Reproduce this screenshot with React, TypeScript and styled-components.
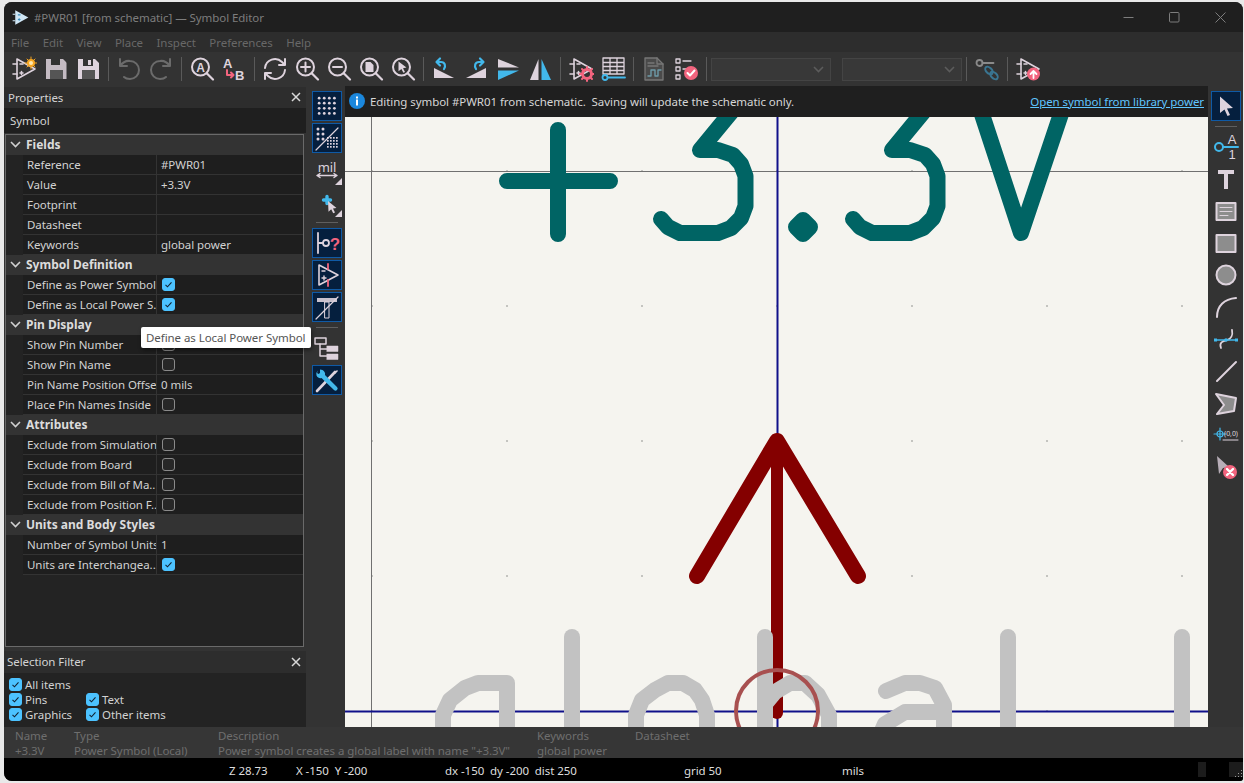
import React from "react";
import styled, { createGlobalStyle } from "styled-components";

const L = "#ded3dd";
const B = "#42b8eb";
const R = "#f2647e";
const D = "#6b6b6b";

const GlobalStyle = createGlobalStyle`
  html, body {
    margin: 0;
    height: 100%;
    overflow: hidden;
    background: #e9e9e9;
  }
  body {
    font-family: "Noto Sans", "Open Sans", sans-serif;
    font-size: 11.5px;
    letter-spacing: -0.06px;
  }
`;

const Window = styled.div`
  margin: 2px 0 0 4px;
  width: 1239px;
  height: 779px;
  border-radius: 8px 8px 3px 8px;
  overflow: hidden;
  display: flex;
  flex-direction: column;
  background: #333;
`;

const TitleBar = styled.div`
  height: 30px;
  flex: none;
  display: flex;
  align-items: center;
  padding-left: 8px;
  background: #1f1f1f;
  color: #7d7d7d;
`;

const TitleText = styled.span`
  margin-left: 5px;
`;

const WindowControls = styled.div`
  margin-left: auto;
  display: flex;
`;

const WindowButton = styled.div`
  width: 46px;
  height: 30px;
  display: flex;
  align-items: center;
  justify-content: center;
`;

const MenuBar = styled.div`
  height: 20px;
  flex: none;
  display: flex;
  align-items: center;
  gap: 13.5px;
  padding-left: 7px;
  background: #2d2d2d;
  color: #686868;
`;

const ToolBar = styled.div`
  height: 34px;
  flex: none;
  display: flex;
  align-items: center;
  padding-left: 4px;
  background: #333;
`;

const ToolSlot = styled.div`
  width: 32px;
  height: 32px;
  flex: none;
  display: flex;
  align-items: center;
  justify-content: center;
`;

const ToolSep = styled.div`
  width: 1px;
  height: 24px;
  flex: none;
  margin: 0 4px;
  background: #5a5a5a;
`;

const Combo = styled.div<{ $gap?: number }>`
  width: 120px;
  height: 23px;
  flex: none;
  box-sizing: border-box;
  margin-right: ${(p) => p.$gap ?? 0}px;
  display: flex;
  align-items: center;
  justify-content: flex-end;
  padding-right: 6px;
  border: 1px solid #444;
  background: #383838;
`;

const Main = styled.div`
  height: 641px;
  flex: none;
  display: flex;
`;

const LeftDock = styled.div`
  width: 302px;
  flex: none;
  display: flex;
  flex-direction: column;
  padding-top: 1px;
  box-sizing: border-box;
`;

const PanelHeader = styled.div<{ $h: number; $pad: number }>`
  height: ${(p) => p.$h}px;
  flex: none;
  display: flex;
  align-items: center;
  justify-content: space-between;
  padding: 0 5px 1px ${(p) => p.$pad}px;
  box-sizing: border-box;
  background: #2d2d2d;
  color: #d4d4d4;
`;

const SelectedKind = styled.div`
  height: 25px;
  flex: none;
  display: flex;
  align-items: center;
  padding-left: 6px;
  margin-bottom: 1px;
  background: #1f1f1f;
  color: #d4d4d4;
`;

const PropGrid = styled.div`
  margin-left: 1px;
  width: 299px;
  height: 513px;
  flex: none;
  box-sizing: border-box;
  border: 1px solid #6a6a6a;
  background: #232323;
`;

const GroupRow = styled.div`
  height: 20px;
  display: flex;
  align-items: center;
  padding-bottom: 1px;
  box-sizing: border-box;
  background: #333;
  color: #dcdcdc;
  font-weight: 700;
  font-size: 12px;
  letter-spacing: 0;
`;

const Chevron = styled.span`
  width: 20px;
  display: flex;
  justify-content: center;
  padding-right: 1px;
  box-sizing: border-box;
`;

const PropRow = styled.div`
  height: 20px;
  display: flex;
  margin-left: 17px;
  box-sizing: border-box;
  border-bottom: 1px solid #333;
  background: #1e1e1e;
  color: #d2d2d2;
`;

const PropLabel = styled.div`
  width: 134px;
  flex: none;
  box-sizing: border-box;
  padding-left: 4px;
  overflow: hidden;
  white-space: nowrap;
  line-height: 19px;
  border-right: 1px solid #333;
`;

const PropValue = styled.div`
  flex: 1;
  display: flex;
  align-items: center;
  padding-left: 4px;
  white-space: nowrap;
`;

const Check = styled.span<{ $on?: boolean }>`
  width: 13px;
  height: 13px;
  flex: none;
  box-sizing: border-box;
  border-radius: 3px;
  display: inline-flex;
  align-items: center;
  justify-content: center;
  background: ${(p) => (p.$on ? "#4cc2ff" : "#272727")};
  border: 1px solid ${(p) => (p.$on ? "#4cc2ff" : "#8a8a8a")};
`;

const RowCheck = styled(Check)`
  margin-left: 1px;
`;

const FilterHead = styled(PanelHeader)`
  margin-top: 4px;
`;

const FilterBody = styled.div`
  flex: 1;
  display: grid;
  grid-template-columns: 77px 1fr;
  grid-auto-rows: 15px;
  padding: 4px 0 0 5px;
  background: #232323;
  color: #d2d2d2;
`;

const FilterItem = styled.label<{ $wide?: boolean }>`
  display: flex;
  align-items: center;
  gap: 3px;
  white-space: nowrap;
  grid-column: ${(p) => (p.$wide ? "1 / span 2" : "auto")};
`;

const SideTools = styled.div<{ $w: number; $pad: number }>`
  width: ${(p) => p.$w}px;
  flex: none;
  box-sizing: border-box;
  padding: 5px 0 0 ${(p) => p.$pad}px;
  display: flex;
  flex-direction: column;
  gap: 2px;
`;

const SideButton = styled.div<{ $active?: boolean }>`
  width: 30px;
  height: 30px;
  flex: none;
  box-sizing: border-box;
  display: flex;
  align-items: center;
  justify-content: center;
  background: ${(p) => (p.$active ? "#051f3e" : "transparent")};
  border: 1px solid ${(p) => (p.$active ? "#0f5aa6" : "transparent")};
`;

const SideSep = styled.div`
  height: 1px;
  flex: none;
  width: 22px;
  margin: 3px 4px;
  background: #5f5f5f;
`;

const Center = styled.div`
  width: 863px;
  flex: none;
  display: flex;
  flex-direction: column;
`;

const InfoBar = styled.div`
  height: 31px;
  flex: none;
  display: flex;
  align-items: center;
  padding: 0 4px 1px 4px;
  box-sizing: border-box;
  background: #1f1f1f;
  color: #d6d6d6;
`;

const InfoText = styled.span`
  margin-left: 5px;
  white-space: pre;
`;

const InfoLink = styled.a`
  margin-left: auto;
  color: #60c6ff;
  text-decoration: underline;
`;

const Canvas = styled.svg`
  display: block;
  flex: none;
`;

const MessagePanel = styled.div`
  height: 31px;
  flex: none;
  display: flex;
  padding: 1px 0 0 11px;
  box-sizing: border-box;
  background: #363636;
  color: #6e6e6e;
  line-height: 15px;
`;

const MessageCol = styled.div<{ $w: number }>`
  width: ${(p) => p.$w}px;
  flex: none;
  white-space: nowrap;
`;

const StatusBar = styled.div`
  flex: 1;
  display: flex;
  align-items: center;
  padding-left: 225px;
  background: #000;
  color: #dedede;
`;

const StatusCell = styled.div<{ $w: number }>`
  width: ${(p) => p.$w}px;
  flex: none;
  white-space: pre;
  padding-top: 2px;
`;

const StatusGauge = styled.div`
  width: 8px;
  height: 15px;
  background: #1c1c1c;
  margin-left: 1px;
`;

const StatusGrip = styled.div`
  width: 14px;
  height: 15px;
  margin-left: 23px;
  background: #1c1c1c;
  display: flex;
  align-items: flex-end;
  justify-content: flex-end;
`;

const Tooltip = styled.div`
  position: absolute;
  left: 141px;
  top: 327px;
  height: 21px;
  padding: 0 6px 0 5px;
  display: flex;
  align-items: center;
  background: #fff;
  color: #555;
  border-radius: 2px;
  box-shadow: 1px 2px 4px rgba(0, 0, 0, 0.45);
  white-space: nowrap;
`;

const CornerWrap = styled.div`
  position: relative;
  width: 30px;
  height: 30px;
  display: flex;
  align-items: center;
  justify-content: center;
`;

const Ico = ({ children, size = 26 }: { children: React.ReactNode; size?: number }) => (
  <svg width={size} height={size} viewBox="0 0 26 26" fill="none" strokeLinecap="round" strokeLinejoin="round">
    {children}
  </svg>
);

const Amp = ({ c = L }: { c?: string }) => (
  <g stroke={c} strokeWidth="1.6">
    <path d="M6 3v20L24 13z" />
    <path d="M2 8h4M2 18h4M9 8h3M9 17h3M10.5 15.5v3" />
  </g>
);

const Lens = ({ children, c = L }: { children?: React.ReactNode; c?: string }) => (
  <g stroke={c}>
    <circle cx="11.5" cy="11" r="8.5" strokeWidth="2" />
    <path d="M18 17.5l6 6" strokeWidth="2.2" />
    {children}
  </g>
);

const FloppyPath = "M3 3h17l4 4v16H3z";

const topIcons: Record<string, React.ReactNode> = {
  newSym: (
    <>
      <Amp />
      <circle cx="20" cy="7" r="4" fill="#f6a623" />
      <path d="M20 1v12M14 7h12M16 3l8 8M24 3l-8 8" stroke="#f6a623" strokeWidth="1" />
      <circle cx="20" cy="7" r="2" fill="#ffe9b0" />
    </>
  ),
  saveOld: (
    <>
      <path d={FloppyPath} fill={L} opacity="0.85" />
      <rect x="8" y="3" width="9" height="6" fill="#333" />
      <rect x="7" y="14" width="13" height="9" fill="#555" />
      <path d="M22 3l2 3v17" stroke="#333" strokeWidth="1" />
    </>
  ),
  save: (
    <>
      <path d={FloppyPath} fill={L} />
      <rect x="8" y="3" width="10" height="7" fill="#333" />
      <rect x="13" y="4" width="3" height="5" fill={L} />
      <rect x="7" y="14" width="13" height="9" fill="#555" />
    </>
  ),
  undo: <path d="M4 3v7h7M4 10C7 6 11 4.500 14 5a9 9 0 0 1 0 18c-3 0-5-1-6-2" stroke={D} strokeWidth="2" />,
  redo: <path d="M22 3v7h-7M22 10C19 6 15 4.500 12 5a9 9 0 0 0 0 18c3 0 5-1 6-2" stroke={D} strokeWidth="2" />,
  find: (
    <Lens>
      <text x="11.5" y="15.5" fontSize="12" fontWeight="700" fill={L} stroke="none" textAnchor="middle" fontFamily="Liberation Sans">A</text>
    </Lens>
  ),
  replace: (
    <>
      <text x="2" y="12" fontSize="13" fontWeight="700" fill={L} fontFamily="Liberation Sans">A</text>
      <text x="14" y="24" fontSize="13" fontWeight="700" fill={L} fontFamily="Liberation Sans">B</text>
      <path d="M6 14v5h6M10 16.5l2.5 2.5-2.5 2.5" stroke={R} strokeWidth="2" />
    </>
  ),
  refresh: (
    <g stroke={L} strokeWidth="2">
      <path d="M3 12a10 10 0 0 1 17-6l3 3M23 3v6h-6" />
      <path d="M23 14a10 10 0 0 1-17 6l-3-3M3 23v-6h6" />
    </g>
  ),
  zoomIn: (
    <Lens>
      <path d="M7 11h9M11.5 6.5v9" strokeWidth="2" />
    </Lens>
  ),
  zoomOut: (
    <Lens>
      <path d="M7 11h9" strokeWidth="2" />
    </Lens>
  ),
  zoomFit: (
    <Lens>
      <path d="M7.5 6h5l3 3v7h-8z" fill={L} stroke="none" />
    </Lens>
  ),
  zoomSel: (
    <Lens>
      <path d="M8.5 5.5l8 6-3.5.7 2 3.8-1.6.8-2-3.8-2.9 2.3z" fill={L} stroke="none" />
    </Lens>
  ),
  rotCcw: (
    <>
      <path d="M3 12v10h20z" fill={L} />
      <path d="M13 13c2-3 1-7-3-7H6M9 2.500L5.500 6 9 9.500" stroke={B} strokeWidth="2.200" />
    </>
  ),
  rotCw: (
    <>
      <path d="M23 12v10H3z" fill={L} />
      <path d="M13 13c-2-3-1-7 3-7h4M17 2.500L20.500 6 17 9.500" stroke={B} strokeWidth="2.200" />
    </>
  ),
  mirrorV: (
    <>
      <path d="M3 3l21 8.5H3z" fill={L} />
      <path d="M3 14.500h21L3 24z" fill={B} />
    </>
  ),
  mirrorH: (
    <>
      <path d="M11.500 3v21H3z" fill={L} />
      <path d="M14.500 3v21H24z" fill={B} />
    </>
  ),
  symProps: (
    <>
      <Amp />
      <circle cx="19" cy="18" r="4.500" stroke={R} strokeWidth="3" />
      <path d="M19 11v3M19 22v3M12 18h3M23 18h3M14 13l2 2M22 21l2 2M24 13l-2 2M16 21l-2 2" stroke={R} strokeWidth="2" />
    </>
  ),
  pinTable: (
    <>
      <path d="M3 2h21v16H3zM3 6.500h21M3 10.500h21M3 14.500h21M10 2v16M17 2v16" stroke={L} strokeWidth="1.300" />
      <circle cx="5" cy="21.500" r="2.500" stroke={B} strokeWidth="1.800" />
      <path d="M8 21.500h17" stroke={B} strokeWidth="1.800" />
    </>
  ),
  datasheet: (
    <g stroke="#777" strokeWidth="1.300">
      <path d="M4 2h12l6 6v16H4z" fill="#4a4a4a" />
      <path d="M16 2v6h6M7 7h6M7 10h10" />
      <path d="M7 20h3v-6h4v6h3v-6h3" stroke="#6d9aa8" strokeWidth="1.400" />
    </g>
  ),
  erc: (
    <>
      <g stroke={L} strokeWidth="1.300">
        <rect x="3" y="3" width="4" height="4" />
        <rect x="3" y="11" width="4" height="4" />
        <rect x="3" y="19" width="4" height="4" />
        <path d="M10 5h8M10 13h3" />
      </g>
      <circle cx="18" cy="17" r="7" fill={R} />
      <path d="M14.500 17l2.500 2.500 4.500-5" stroke="#fff" strokeWidth="2" />
    </>
  ),
  link: (
    <>
      <circle cx="5.500" cy="7" r="3" stroke="#8a8a8a" strokeWidth="1.800" />
      <path d="M8.500 7h11" stroke="#8a8a8a" strokeWidth="1.800" />
      <ellipse cx="15" cy="14.500" rx="4.500" ry="2.800" transform="rotate(45 15 14.500)" stroke="#3a7591" strokeWidth="2" />
      <ellipse cx="20" cy="19.500" rx="4.500" ry="2.800" transform="rotate(45 20 19.500)" stroke="#3a7591" strokeWidth="2" />
    </>
  ),
  symUp: (
    <>
      <Amp />
      <circle cx="18.500" cy="18" r="6.500" fill={R} />
      <path d="M18.500 22v-7M15.500 18l3-3 3 3" stroke="#fff" strokeWidth="1.800" />
    </>
  ),
};

const sideIcons: Record<string, React.ReactNode> = {
  dots: (
    <g fill={L}>
      {[5, 10.500, 16, 21.500].flatMap((y) =>
        [4, 9.500, 15, 20.500].map((x) => <circle key={`${x}-${y}`} cx={x + 0.5} cy={y - 0.5} r="1.500" />),
      )}
    </g>
  ),
  dotsOver: (
    <>
      <g fill={L}>
        {[4, 9, 14].flatMap((y) => [4, 9].map((x) => <circle key={`${x}-${y}`} cx={x} cy={y} r="1.500" />))}
        {[12, 15, 18, 21].flatMap((y) =>
          [12, 15, 18, 21].map((x) => <rect key={`${x}-${y}`} x={x + 1} y={y} width="1.700" height="1.700" />),
        )}
      </g>
      <path d="M2 25L24 3" stroke={L} strokeWidth="1.200" />
    </>
  ),
  mil: (
    <>
      <text x="13" y="15" fontSize="13" fill={L} textAnchor="middle" fontFamily="Noto Sans">mil</text>
      <path d="M3 18.500h20M6 16.500l-3 2 3 2M20 16.500l3 2-3 2" stroke={L} strokeWidth="1.400" />
    </>
  ),
  cursorPlus: (
    <>
      <path d="M9.500 11h7M13 7.500v7" stroke={B} strokeWidth="3.400" />
      <path d="M14 12l8.500 7-3.500.5 2 4-1.800.8-2-4-2.700 2.500z" fill={L} />
    </>
  ),
  pinQ: (
    <>
      <path d="M4 3v20M4 13h5" stroke={L} strokeWidth="1.800" />
      <circle cx="12" cy="13" r="3" stroke={L} strokeWidth="1.800" />
      <text x="21" y="20" fontSize="17" fontWeight="700" fill={R} textAnchor="middle" fontFamily="Liberation Sans">?</text>
    </>
  ),
  ampHidden: (
    <>
      <path d="M5 3v20L24 13z" stroke={L} strokeWidth="1.600" />
      <path d="M14 2v5M14 18v6" stroke={R} strokeWidth="1.800" />
      <path d="M8 9h3M8 16h4M10 14v4" stroke={L} strokeWidth="1.400" />
    </>
  ),
  textHidden: (
    <>
      <path d="M3 4h20v4h-8v16h-4V8H3z" fill={L} fillOpacity="0.9" />
      <rect x="11" y="8" width="4" height="16" fill="#051f3e" stroke={L} strokeWidth="1" />
      <path d="M2 25L24 3" stroke={L} strokeWidth="1.200" />
    </>
  ),
  tree: (
    <g stroke={L}>
      <rect x="1" y="3" width="11" height="6" strokeWidth="1.500" />
      <rect x="13" y="11" width="11" height="5.500" fill={L} strokeWidth="0.500" />
      <rect x="13" y="19" width="11" height="5.500" fill={L} strokeWidth="0.500" />
      <path d="M6 9v12h7M6 14h7" strokeWidth="1.500" />
    </g>
  ),
  tools: (
    <>
      <path d="M3 24L21 5" stroke={L} strokeWidth="2.600" />
      <path d="M20 6l3-3 1 1-3 3z" fill={L} />
      <path d="M4 3.500a5 5 0 0 0-1.500 5c1 2.500 3.500 3 5 2.500L20 23a2 2 0 0 0 3-3L11 8c.5-2-.5-4-2.500-5L6 2.500V6L4.500 7 3 6z" fill={B} />
    </>
  ),
  arrow: <path d="M7 3.500l13 11.500-6 .5 3 6.500-2.500 1-3-6.500L7 20z" fill={L} />,
  pin: (
    <>
      <circle cx="6" cy="13" r="4" stroke={B} strokeWidth="2" />
      <path d="M10 13h15" stroke={B} strokeWidth="2" />
      <text x="19" y="10" fontSize="13" fill={L} textAnchor="middle" fontFamily="Liberation Sans">A</text>
      <text x="19" y="25" fontSize="13" fill={L} textAnchor="middle" fontFamily="Liberation Sans">1</text>
    </>
  ),
  bigT: <path d="M5 4h16v4h-6v15h-4V8H5z" fill={L} />,
  textBox: (
    <>
      <rect x="3.500" y="5" width="19" height="17" fill="#8d8d8d" stroke={L} strokeWidth="2" />
      <path d="M7 9.500h12M7 13.500h12M7 17.500h8" stroke={L} strokeWidth="1" />
    </>
  ),
  rect: <rect x="3.500" y="5" width="19" height="17" fill="#8d8d8d" stroke={L} strokeWidth="2" />,
  circle: <circle cx="13" cy="13" r="9.500" fill="#8d8d8d" stroke={L} strokeWidth="2" />,
  arc: <path d="M4 23C4 12 11 5 23 4" stroke={L} strokeWidth="2" />,
  bezier: (
    <>
      <path d="M8 22c-2-5 1-7 6-8 4-1 6-5 5-10" stroke={L} strokeWidth="1.800" />
      <path d="M3 14h20" stroke={B} strokeWidth="1.500" />
      <rect x="1" y="12.500" width="3" height="3" fill={B} />
      <rect x="22" y="12.500" width="3" height="3" fill={B} />
      <circle cx="13" cy="14" r="1.800" fill={B} />
    </>
  ),
  line: <path d="M4 23L23 4" stroke={L} strokeWidth="2" />,
  poly: <path d="M3 4l20 4-2 13-17 3 7-9z" fill="#8d8d8d" stroke={L} strokeWidth="2" />,
  anchor: (
    <>
      <circle cx="7" cy="12" r="3" stroke={B} strokeWidth="1.200" />
      <path d="M1 12h12M7 6v12" stroke={B} strokeWidth="1.200" />
      <text x="18" y="14" fontSize="7" fill={L} textAnchor="middle" fontFamily="Noto Sans">(0,0)</text>
      <path d="M10 18h15" stroke={L} strokeWidth="1" />
    </>
  ),
  del: (
    <>
      <path d="M4 2l12 11-6 1-4 6z" fill="#b8aeb8" />
      <circle cx="17" cy="18" r="7" fill={R} />
      <path d="M14 15l6 6M20 15l-6 6" stroke="#fff" strokeWidth="2.400" />
    </>
  ),
};

const Corner = () => (
  <svg width="30" height="30" viewBox="0 0 30 30" style={{ position: "absolute" }}>
    <path d="M30 23v7h-7z" fill={L} />
  </svg>
);

const TickMark = () => (
  <svg width="9" height="9" viewBox="0 0 9 9">
    <path d="M1.500 4.800l2 2 4-4.500" stroke="#123" strokeWidth="1.100" fill="none" />
  </svg>
);

const ChevronDown = ({ c = "#d0d0d0" }: { c?: string }) => (
  <svg width="11" height="7" viewBox="0 0 11 7">
    <path d="M1 1l4.500 4.500L10 1" stroke={c} strokeWidth="1.600" fill="none" />
  </svg>
);

const CloseX = () => (
  <svg width="10" height="10" viewBox="0 0 10 10">
    <path d="M1 1l8 8M9 1l-8 8" stroke="#d8d8d8" strokeWidth="1.500" />
  </svg>
);

type Row = { label: string; value?: string; check?: boolean };
type Group = { title: string; rows: Row[] };

const GROUPS: Group[] = [
  {
    title: "Fields",
    rows: [
      { label: "Reference", value: "#PWR01" },
      { label: "Value", value: "+3.3V" },
      { label: "Footprint" },
      { label: "Datasheet" },
      { label: "Keywords", value: "global power" },
    ],
  },
  {
    title: "Symbol Definition",
    rows: [
      { label: "Define as Power Symbol", check: true },
      { label: "Define as Local Power S..", check: true },
    ],
  },
  {
    title: "Pin Display",
    rows: [
      { label: "Show Pin Number", check: false },
      { label: "Show Pin Name", check: false },
      { label: "Pin Name Position Offset", value: "0 mils" },
      { label: "Place Pin Names Inside", check: false },
    ],
  },
  {
    title: "Attributes",
    rows: [
      { label: "Exclude from Simulation", check: false },
      { label: "Exclude from Board", check: false },
      { label: "Exclude from Bill of Ma..", check: false },
      { label: "Exclude from Position F..", check: false },
    ],
  },
  {
    title: "Units and Body Styles",
    rows: [
      { label: "Number of Symbol Units", value: "1" },
      { label: "Units are Interchangea...", check: true },
    ],
  },
];

const TEAL = "#006464";
const GREY = "#c2c2c2";
const THREE = "M747 93L700 150H718L733 155L741 164L745.500 176V206L741 218L731 228L718 233H680L668 227L661 219";

// coordinates are taken straight from the window, so the viewBox starts at the canvas origin
const SymbolCanvas = () => (
  <Canvas width="863" height="610" viewBox="345 117 863 610">
    <rect x="345" y="117" width="863" height="610" fill="#f5f4ef" />
    {[171, 306, 441, 576, 711].flatMap((y) =>
      [372, 507, 642, 777, 912, 1047, 1182].map((x) => (
        <rect key={`${x}-${y}`} x={x - 1} y={y - 1} width="2" height="2" fill="#c4c4c0" />
      )),
    )}
    <path d="M345 171.500H1208M371.500 117V727" stroke="#707070" strokeWidth="1" />
    <path d="M777.500 117V727M345 711.500H1208" stroke="#10108a" strokeWidth="2" />
    <g stroke={TEAL} strokeWidth="16" strokeLinecap="round" strokeLinejoin="round" fill="none">
      <path d="M507 181H610M558 130V234" />
      <path d={THREE} />
      <path d={THREE} transform="translate(192 0)" />
      <path d="M803 220L810 227L803 234L796 227Z" fill={TEAL} />
      <path d="M974 90L1021 233L1069 90" />
    </g>
    <g stroke="#840000" strokeLinecap="round" strokeLinejoin="round" fill="none">
      <path d="M697 576L777 441L858 576" strokeWidth="16" />
      <path d="M777 441V713" strokeWidth="12" />
    </g>
    <g stroke={GREY} strokeWidth="16" strokeLinecap="round" strokeLinejoin="round" fill="none">
      <path d="M443 740V715L450 700L465 688L478 683H500L507 683M507 683V740" />
      <path d="M572 637V740" />
      <path d="M636 740V715L642 700L655 690L668 683H683L695 690L702 700L707 715V740" />
      <path d="M765 637V740M765 704L775 692L790 683H805L818 695L829 715V740" />
      <path d="M886 691L905 683H920L935 688L944 705V740M944 712H905L885 724L878 740" />
      <path d="M1008 637V740M1182 637V740" />
    </g>
    <circle cx="777" cy="711" r="41" fill="none" stroke="#a85050" strokeWidth="4" />
  </Canvas>
);

const TOP: string[] = [
  "newSym", "saveOld", "save", "sep", "undo", "redo", "sep", "find", "replace", "sep",
  "refresh", "zoomIn", "zoomOut", "zoomFit", "zoomSel", "sep",
  "rotCcw", "rotCw", "mirrorV", "mirrorH", "sep", "symProps", "pinTable", "sep", "datasheet", "erc", "sep",
];

const RIGHT = ["pin", "bigT", "textBox", "rect", "circle", "arc", "bezier", "line", "poly", "anchor", "del"];

export default function App() {
  return (
    <>
      <GlobalStyle />
      <Window>
        <TitleBar>
          <svg width="17" height="17" viewBox="0 0 26 26">
            <path d="M5 2v22L25 13z" fill="#cfe6f5" />
            <path d="M9 9h4M9 16h4M11 14v4" stroke="#3a8fc0" strokeWidth="1.600" />
            <path d="M1 8h4M1 18h4" stroke="#cfe6f5" strokeWidth="1.600" />
          </svg>
          <TitleText>#PWR01 [from schematic] — Symbol Editor</TitleText>
          <WindowControls>
            <WindowButton>
              <svg width="11" height="11" viewBox="0 0 11 11">
                <path d="M0.500 5.500h10" stroke="#7d7d7d" />
              </svg>
            </WindowButton>
            <WindowButton>
              <svg width="11" height="11" viewBox="0 0 11 11">
                <rect x="0.500" y="0.500" width="9.500" height="9.500" rx="1" stroke="#7d7d7d" fill="none" />
              </svg>
            </WindowButton>
            <WindowButton>
              <svg width="11" height="11" viewBox="0 0 11 11">
                <path d="M0.500 0.500l10 10M10.500 0.500l-10 10" stroke="#7d7d7d" />
              </svg>
            </WindowButton>
          </WindowControls>
        </TitleBar>
        <MenuBar>
          {["File", "Edit", "View", "Place", "Inspect", "Preferences", "Help"].map((m) => (
            <span key={m}>{m}</span>
          ))}
        </MenuBar>
        <ToolBar>
          {TOP.map((t, i) =>
            t === "sep" ? (
              <ToolSep key={i} />
            ) : (
              <ToolSlot key={i}>
                <Ico>{topIcons[t]}</Ico>
              </ToolSlot>
            ),
          )}
          <Combo $gap={11}>
            <ChevronDown c="#5c5c5c" />
          </Combo>
          <Combo>
            <ChevronDown c="#5c5c5c" />
          </Combo>
          <ToolSep />
          <ToolSlot>
            <Ico>{topIcons.link}</Ico>
          </ToolSlot>
          <ToolSep />
          <ToolSlot>
            <Ico>{topIcons.symUp}</Ico>
          </ToolSlot>
        </ToolBar>
        <Main>
          <LeftDock>
            <PanelHeader $h={21} $pad={4}>
              Properties
              <CloseX />
            </PanelHeader>
            <SelectedKind>Symbol</SelectedKind>
            <PropGrid>
              {GROUPS.map((g) => (
                <React.Fragment key={g.title}>
                  <GroupRow>
                    <Chevron>
                      <ChevronDown />
                    </Chevron>
                    {g.title}
                  </GroupRow>
                  {g.rows.map((r) => (
                    <PropRow key={r.label}>
                      <PropLabel>{r.label}</PropLabel>
                      <PropValue>
                        {r.check !== undefined ? <RowCheck $on={r.check}>{r.check && <TickMark />}</RowCheck> : r.value}
                      </PropValue>
                    </PropRow>
                  ))}
                </React.Fragment>
              ))}
            </PropGrid>
            <FilterHead $h={22} $pad={3}>
              Selection Filter
              <CloseX />
            </FilterHead>
            <FilterBody>
              <FilterItem $wide>
                <Check $on>
                  <TickMark />
                </Check>
                All items
              </FilterItem>
              {["Pins", "Text", "Graphics", "Other items"].map((f) => (
                <FilterItem key={f}>
                  <Check $on>
                    <TickMark />
                  </Check>
                  {f}
                </FilterItem>
              ))}
            </FilterBody>
          </LeftDock>
          <SideTools $w={39} $pad={6}>
            <SideButton $active>
              <Ico size={24}>{sideIcons.dots}</Ico>
            </SideButton>
            <SideButton $active>
              <Ico size={26}>{sideIcons.dotsOver}</Ico>
            </SideButton>
            <CornerWrap>
              <Corner />
              <Ico>{sideIcons.mil}</Ico>
            </CornerWrap>
            <CornerWrap>
              <Corner />
              <Ico>{sideIcons.cursorPlus}</Ico>
            </CornerWrap>
            <SideSep />
            <SideButton $active>
              <Ico>{sideIcons.pinQ}</Ico>
            </SideButton>
            <SideButton $active>
              <Ico>{sideIcons.ampHidden}</Ico>
            </SideButton>
            <SideButton $active>
              <Ico>{sideIcons.textHidden}</Ico>
            </SideButton>
            <SideSep />
            <SideButton>
              <Ico>{sideIcons.tree}</Ico>
            </SideButton>
            <SideButton $active>
              <Ico>{sideIcons.tools}</Ico>
            </SideButton>
          </SideTools>
          <Center>
            <InfoBar>
              <svg width="16" height="16" viewBox="0 0 16 16">
                <circle cx="8" cy="8" r="8" fill="#1b87dc" />
                <rect x="7" y="6.500" width="2" height="6" fill="#fff" />
                <rect x="7" y="3.500" width="2" height="2" fill="#fff" />
              </svg>
              <InfoText>Editing symbol #PWR01 from schematic.  Saving will update the schematic only.</InfoText>
              <InfoLink>Open symbol from library power</InfoLink>
            </InfoBar>
            <SymbolCanvas />
          </Center>
          <SideTools $w={35} $pad={3}>
            <SideButton $active>
              <Ico>{sideIcons.arrow}</Ico>
            </SideButton>
            <SideSep />
            {RIGHT.map((n) => (
              <SideButton key={n}>
                <Ico>{sideIcons[n]}</Ico>
              </SideButton>
            ))}
          </SideTools>
        </Main>
        <MessagePanel>
          <MessageCol $w={59}>
            Name
            <br />
            +3.3V
          </MessageCol>
          <MessageCol $w={144}>
            Type
            <br />
            Power Symbol (Local)
          </MessageCol>
          <MessageCol $w={319}>
            Description
            <br />
            Power symbol creates a global label with name "+3.3V"
          </MessageCol>
          <MessageCol $w={98}>
            Keywords
            <br />
            global power
          </MessageCol>
          <MessageCol $w={100}>Datasheet</MessageCol>
        </MessagePanel>
        <StatusBar>
          <StatusCell $w={67}>Z 28.73</StatusCell>
          <StatusCell $w={149}>X -150  Y -200</StatusCell>
          <StatusCell $w={239}>dx -150  dy -200  dist 250</StatusCell>
          <StatusCell $w={158}>grid 50</StatusCell>
          <StatusCell $w={355}>mils</StatusCell>
          <StatusGauge />
          <StatusGrip>
            <svg width="8" height="8" viewBox="0 0 8 8">
              <path d="M6 1h1v1H6zM3 4h1v1H3zM6 4h1v1H6zM0 7h1v1H0zM3 7h1v1H3zM6 7h1v1H6z" fill="#9a9a9a" />
            </svg>
          </StatusGrip>
        </StatusBar>
      </Window>
      <Tooltip>Define as Local Power Symbol</Tooltip>
    </>
  );
}
